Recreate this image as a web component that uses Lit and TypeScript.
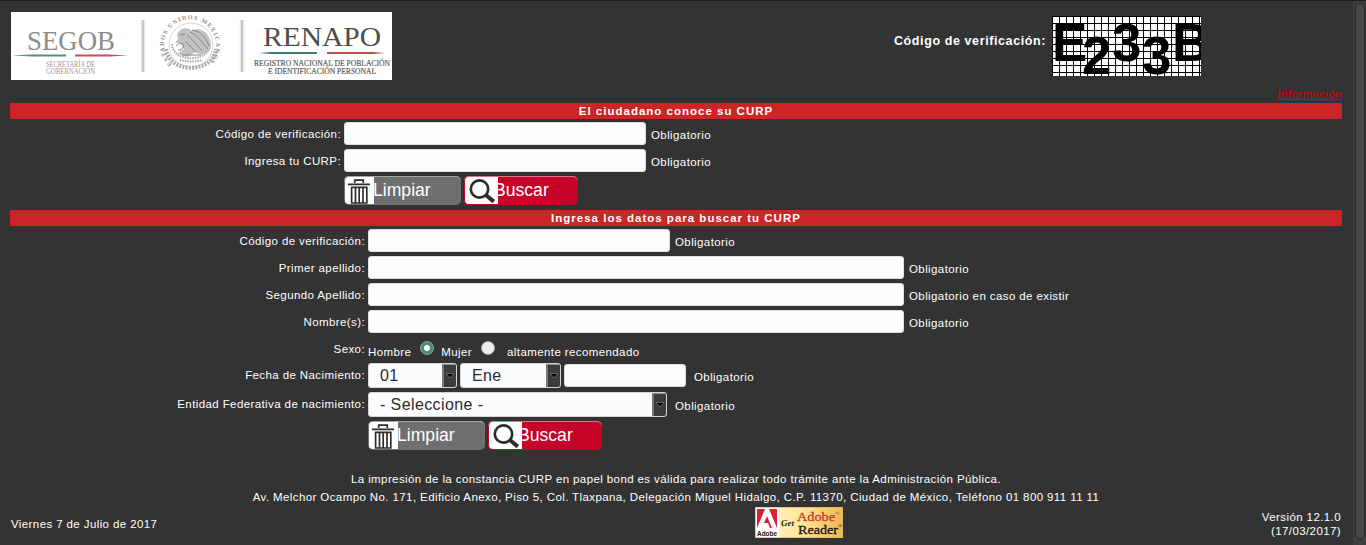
import { LitElement, html, css, svg } from "lit";
import { customElement, property } from "lit/decorators.js";

@customElement("curp-button")
class CurpButton extends LitElement {
  @property() kind = "clear";
  static styles = css`
    :host { display: block; }
    .btn { box-sizing: border-box; display: flex; align-items: center; height: 29px; padding: 0 0 1px 1px; border: 0; border-radius: 5px; font: 17.6px "Liberation Sans", Arial, sans-serif; color: #fff; text-align: left; white-space: nowrap; }
    .clear { width: 117px; background: #6f6f6f; box-shadow: inset 0 1px 0 #a5a5a5; }
    .search { width: 114px; background: #c60328; box-shadow: inset 0 1px 0 #e0718a; }
    svg { display: block; flex: none; border-radius: 4px 0 0 4px; }
    .clear span { margin-left: -1px; }
    .search span { margin-left: -4px; }
  `;
  render() {
    const clear = this.kind === "clear";
    return html`<button class="btn ${this.kind}">
      ${clear
        ? html`<svg width="29" height="27" viewBox="0 0 29 27"><rect width="29" height="27" fill="#fff"/><path d="M3 7.3H25M9.7 6V3.2H18.3V6M6 10.4H22.5M6.6 10V26.5M10.5 10V26.5M14.2 10V26.5M18 10V26.5M21.8 10V26.5M6 26H22.5" fill="none" stroke="#2d2d30" stroke-width="1.7"/></svg>`
        : html`<svg width="33" height="27" viewBox="0 0 33 27"><rect width="33" height="27" fill="#fff"/><circle cx="14.5" cy="12" r="8.7" fill="none" stroke="#2d2d30" stroke-width="2.7"/><path d="M20.6 17.8L28.8 24.6" stroke="#2d2d30" stroke-width="4"/></svg>`}
      <span>${clear ? "Limpiar" : "Buscar"}</span>
    </button>`;
  }
}

@customElement("curp-select")
class CurpSelect extends LitElement {
  @property() value = "";
  static styles = css`
    :host { display: block; }
    .box { box-sizing: border-box; display: flex; justify-content: space-between; height: 25px; border: 1px solid #d5d5d5; border-radius: 3px; background: #fbfcfd; overflow: hidden; }
    .value { padding-left: 11px; font: 16px/23px "Liberation Sans", Arial, sans-serif; color: #2b2b2b; }
    .arrow { box-sizing: border-box; width: 14px; display: flex; align-items: center; justify-content: center; background: #3c3c3e; border-top: 1px solid #8d8d8d; border-left: 2px solid #777; }
  `;
  render() {
    return html`<div class="box"><span class="value">${this.value}</span><span class="arrow"><svg width="8" height="6" viewBox="0 0 8 6"><path d="M0 .5H8L4 5z" fill="#000" stroke="#aaa" stroke-width=".5"/></svg></span></div>`;
  }
}

@customElement("app-root")
class AppRoot extends LitElement {
  static styles = css`
    :host { display: block; }
    .window { box-sizing: border-box; display: flex; height: 545px; background: #333; border-top: 1px solid #1f1f1f; color: #fff; font: 11.5px/16px "Liberation Sans", Arial, sans-serif; letter-spacing: 0.4px; overflow: hidden; white-space: nowrap; }
    .page { width: 1332px; padding: 0 11px 0 10px; flex: none; }
    .scroll { box-sizing: border-box; width: 13px; background: #3d3d3d; padding: 2px 1px 6px 2px; }
    .thumb { box-sizing: border-box; height: 100%; border: 1px solid #292929; border-radius: 5px; background: #484848; }
    .header { display: flex; justify-content: space-between; height: 83px; padding: 11px 141px 0 1px; box-sizing: border-box; }
    .logo, .captcha { display: block; flex: none; }
    .code { display: flex; align-items: flex-start; gap: 6px; padding-top: 4px; }
    .code b { font-size: 12.5px; letter-spacing: 0.6px; padding-top: 17px; }
    .info { height: 19px; box-sizing: border-box; padding-top: 2px; text-align: right; }
    .info a { color: #dc0000; text-decoration: underline; }
    .banner { height: 16px; background: #cd2428; text-align: center; font-weight: bold; letter-spacing: 1px; }
    .form { display: grid; grid-template-columns: 331px 1fr; column-gap: 3px; grid-auto-rows: 27px; padding-top: 3px; height: 91px; box-sizing: border-box; }
    .second { grid-template-columns: 355px 1fr; grid-template-rows: 27px 27px 27px 27px 26px 29px 29px 30px; height: 237px; }
    .label { text-align: right; padding-top: 4px; }
    .row { display: flex; align-items: flex-start; }
    .row > span { padding: 5px 0 0 5px; }
    .text { display: block; box-sizing: border-box; height: 23px; border: 1px solid #ddd; border-radius: 3px; background: #fcfdfe; margin: 0; padding: 0; }
    .w302 { width: 302px; }
    .w536 { width: 536px; }
    .w122 { width: 122px; margin: 1px 3px 0; }
    .day { width: 89px; margin-right: 3px; }
    .month { width: 101px; }
    .state { width: 299px; margin-right: 3px; }
    .buttons { gap: 3px; }
    .sex > span { padding: 7px 0 0; }
    .sex .dot { box-sizing: border-box; width: 14px; height: 14px; border-radius: 50%; padding: 0; margin: 4px 7px 0 9px; background: #eee; border: 1px solid #aaa; }
    .sex .on { background: radial-gradient(#fff 0 2.6px, #518978 3.4px); border-color: #82aa9e; }
    .sex .hint { padding-left: 5px; }
    .date .note { padding-top: 6px; }
    .footer { text-align: center; line-height: 18px; padding-top: 7px; }
    .bottom { display: grid; grid-template-columns: 744px 1fr auto; line-height: 14px; height: 40px; padding: 1px 1px 0; }
    .today { padding-top: 10px; }
    .version { text-align: right; padding-top: 3px; }
    .reader { display: block; }
  `;

  logo() {
    return svg`<svg class="logo" width="381" height="68" viewBox="0 0 381 68" font-family="Liberation Serif, serif">
      <defs>
        <linearGradient id="sep"><stop stop-color="#fff"/><stop offset=".5" stop-color="#aaa"/><stop offset="1" stop-color="#fff"/></linearGradient>
        <path id="arc" d="M161 52A26 26 0 1 1 197 52"/>
      </defs>
      <rect width="381" height="68" fill="#fff"/>
      <g letter-spacing="0">
        <text x="16" y="38" font-size="27" fill="#8c8c8c" textLength="88" lengthAdjust="spacingAndGlyphs">SEGOB</text>
        <path d="M1 43.5L20 42.5H55V44.5H20z" fill="#55917a"/><path d="M64 42.5H98L117 43.5L98 44.5H64z" fill="#c94d5c"/>
        <g fill="#999" font-size="7.3"><text x="35" y="54.5" textLength="49" lengthAdjust="spacingAndGlyphs">SECRETARÍA DE</text><text x="35" y="62" textLength="49" lengthAdjust="spacingAndGlyphs">GOBERNACIÓN</text></g>
        <text x="252" y="34" font-size="28" fill="#4d4d4d" textLength="118" lengthAdjust="spacingAndGlyphs">RENAPO</text>
        <path d="M248 41L260 40H306V42H260z" fill="#3f7c61"/><path d="M316 40H362L374 41L362 42H316z" fill="#b95148"/>
        <g fill="#555" stroke="#555" stroke-width=".15" font-size="8"><text x="243" y="53.5" textLength="136" lengthAdjust="spacingAndGlyphs">REGISTRO NACIONAL DE POBLACIÓN</text><text x="257" y="62" textLength="108" lengthAdjust="spacingAndGlyphs">E IDENTIFICACIÓN PERSONAL</text></g>
        <path d="M132 8V60M231 8V60" stroke="#b5b5b5" stroke-width="2.4"/><path d="M132 8V60M231 8V60" stroke="#ddd" stroke-width="5" opacity=".4"/>
        <text font-size="6" fill="#888" font-weight="bold"><textPath href="#arc" startOffset="0" textLength="120">ESTADOS UNIDOS MEXICANOS</textPath></text>
        <circle cx="180" cy="33" r="22" fill="none" stroke="#c4c4c4" stroke-width=".7"/>
        <g fill="none" stroke="#aaa">
          <path d="M155 37C158 62 202 62 205 37" stroke-width="4" stroke-dasharray="2 1.2"/>
          <path d="M161 32C161 51 199 51 199 32M169 48C175 50 185 50 191 48" stroke-width="2" stroke-dasharray="1.5 1"/>
        </g>
        <path d="M166 22C170 15 177 15 181 19C190 13 201 23 200 35C198 43 190 44 184 40L177 45L166 42L173 37L169 31L164 31L167 27z" fill="#c2c2c2"/>
        <path d="M179 20C188 24 191 31 197 37M181 18C190 19 196 27 198 34M176 23C182 28 187 34 191 39M169 23L174 22M165 34C174 26 175 39 167 38M174 29C179 33 182 38 185 40M171 43L190 43" fill="none" stroke="#858585" stroke-width="1"/>
      </g>
    </svg>`;
  }

  captcha() {
    return svg`<svg class="captcha" width="149" height="60" viewBox="0 0 149 60" font-family="Liberation Sans, Arial, sans-serif" font-weight="bold" font-size="53" letter-spacing="0">
      <defs><pattern id="grid" width="7" height="7" patternUnits="userSpaceOnUse"><rect width="7" height="7" fill="#fff"/><path d="M0 .5H7M.5 0V7" stroke="#000"/></pattern></defs>
      <rect width="149" height="60" fill="url(#grid)"/>
      <text x="0" y="45">E</text><text x="30" y="58">2</text><text x="60" y="45">3</text><text x="90" y="58">3</text><text x="120" y="45">B</text>
    </svg>`;
  }

  reader() {
    return svg`<svg class="reader" width="88" height="31" viewBox="0 0 88 31" letter-spacing="0">
      <defs><linearGradient id="gold"><stop stop-color="#fff4c8"/><stop offset=".5" stop-color="#ffe9a0"/><stop offset="1" stop-color="#eeb84e"/></linearGradient></defs>
      <rect width="88" height="31" fill="url(#gold)"/><rect width="24" height="31" fill="#fff"/>
      <rect x="2" y="2" width="20" height="19" fill="#d81f35"/><path d="M2 21L10 2H14L22 21H17L12 9L9 16H13L15 21z" fill="#fff"/>
      <text x="2" y="29" font-family="Liberation Sans" font-weight="bold" font-size="7.5" textLength="20" lengthAdjust="spacingAndGlyphs" fill="#111">Adobe</text>
      <g font-family="Liberation Serif"><text x="26" y="19" font-size="8.5" font-style="italic" font-weight="bold" textLength="13" lengthAdjust="spacingAndGlyphs" fill="#222">Get</text>
      <text x="42" y="14" font-size="13.5" textLength="38" lengthAdjust="spacingAndGlyphs" fill="#c8382e" stroke="#c8382e" stroke-width=".3">Adobe</text><text x="43" y="27" font-size="13.5" textLength="40" lengthAdjust="spacingAndGlyphs" fill="#171310" stroke="#171310" stroke-width=".3">Reader</text>
      <text x="80" y="8" font-size="6" fill="#c8382e">®</text><text x="83" y="21" font-size="6" fill="#222">®</text></g>
      <rect x=".5" y=".5" width="87" height="30" fill="none" stroke="#d9b572" stroke-width=".7"/>
    </svg>`;
  }

  field(label: string, size: string, note: string) {
    return html`<div class="label">${label}</div><div class="row"><input class="text ${size}"><span>${note}</span></div>`;
  }

  buttons() {
    return html`<div></div><div class="row buttons"><curp-button kind="clear"></curp-button><curp-button kind="search"></curp-button></div>`;
  }

  render() {
    return html`<div class="window">
      <main class="page">
        <div class="header">${this.logo()}<div class="code"><b>Código de verificación:</b>${this.captcha()}</div></div>
        <div class="info"><a>Información</a></div>
        <div class="banner">El ciudadano conoce su CURP</div>
        <div class="form">
          ${this.field("Código de verificación:", "w302", "Obligatorio")}
          ${this.field("Ingresa tu CURP:", "w302", "Obligatorio")}
          ${this.buttons()}
        </div>
        <div class="banner">Ingresa los datos para buscar tu CURP</div>
        <div class="form second">
          ${this.field("Código de verificación:", "w302", "Obligatorio")}
          ${this.field("Primer apellido:", "w536", "Obligatorio")}
          ${this.field("Segundo Apellido:", "w536", "Obligatorio en caso de existir")}
          ${this.field("Nombre(s):", "w536", "Obligatorio")}
          <div class="label">Sexo:</div>
          <div class="row sex"><span>Hombre</span><span class="dot on"></span><span>Mujer</span><span class="dot"></span><span class="hint">altamente recomendado</span></div>
          <div class="label">Fecha de Nacimiento:</div>
          <div class="row date"><curp-select class="day" value="01"></curp-select><curp-select class="month" value="Ene"></curp-select><input class="text w122"><span class="note">Obligatorio</span></div>
          <div class="label">Entidad Federativa de nacimiento:</div>
          <div class="row date"><curp-select class="state" value="- Seleccione -"></curp-select><span class="note">Obligatorio</span></div>
          ${this.buttons()}
        </div>
        <div class="footer">La impresión de la constancia CURP en papel bond es válida para realizar todo trámite ante la Administración Pública.<br>Av. Melchor Ocampo No. 171, Edificio Anexo, Piso 5, Col. Tlaxpana, Delegación Miguel Hidalgo, C.P. 11370, Ciudad de México, Teléfono 01 800 911 11 11</div>
        <div class="bottom"><div class="today">Viernes 7 de Julio de 2017</div>${this.reader()}<div class="version">Versión 12.1.0<br>(17/03/2017)</div></div>
      </main>
      <div class="scroll"><div class="thumb"></div></div>
    </div>`;
  }
}
